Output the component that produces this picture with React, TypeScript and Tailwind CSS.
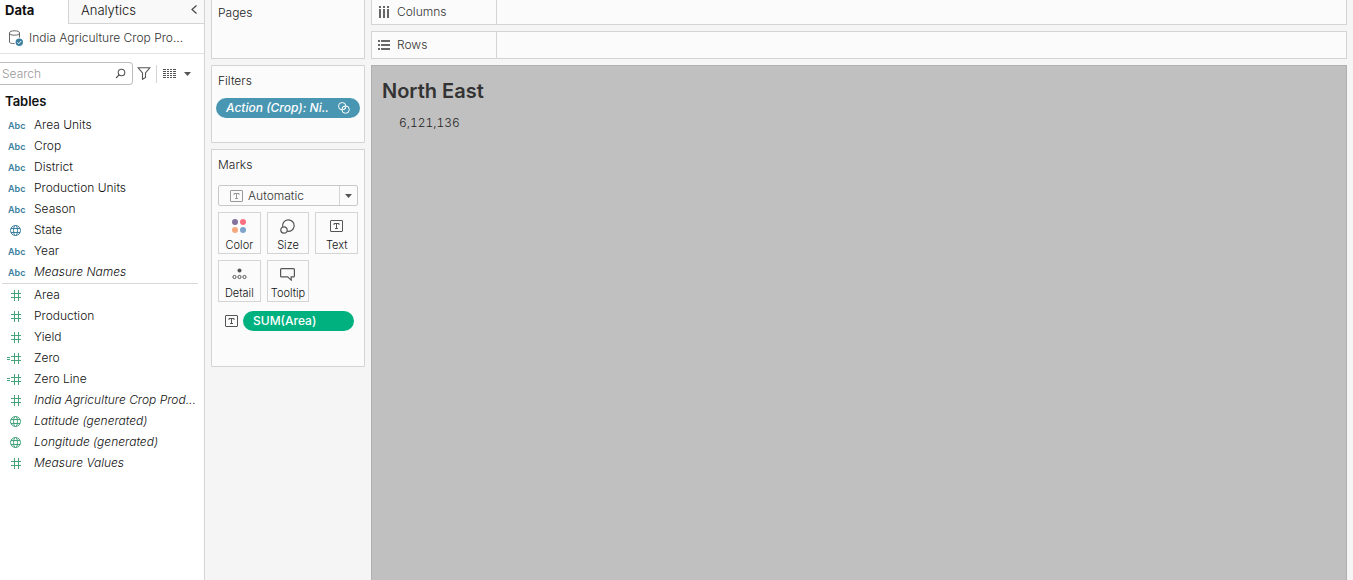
import type { ReactNode } from "react";

type FieldKind = "text" | "geo" | "number" | "calc";
type Field = { name: string; kind: FieldKind; generated?: boolean };

const dimensions: Field[] = [
  { name: "Area Units", kind: "text" },
  { name: "Crop", kind: "text" },
  { name: "District", kind: "text" },
  { name: "Production Units", kind: "text" },
  { name: "Season", kind: "text" },
  { name: "State", kind: "geo" },
  { name: "Year", kind: "text" },
  { name: "Measure Names", kind: "text", generated: true },
];

const measures: Field[] = [
  { name: "Area", kind: "number" },
  { name: "Production", kind: "number" },
  { name: "Yield", kind: "number" },
  { name: "Zero", kind: "calc" },
  { name: "Zero Line", kind: "calc" },
  { name: "India Agriculture Crop Prod...", kind: "number", generated: true },
  { name: "Latitude (generated)", kind: "geo", generated: true },
  { name: "Longitude (generated)", kind: "geo", generated: true },
  { name: "Measure Values", kind: "number", generated: true },
];

function GlobeIcon() {
  return (
    <svg width="11" height="11" viewBox="0 0 11 11" fill="none" stroke="currentColor" strokeWidth="1">
      <circle cx="5.5" cy="5.5" r="5" />
      <ellipse cx="5.5" cy="5.5" rx="2" ry="5" />
      <path d="M1 3.5h9M1 7.5h9" />
    </svg>
  );
}

function HashIcon({ calculated }: { calculated?: boolean }) {
  return (
    <svg width="15" height="11" viewBox="0 0 15 11" fill="none" stroke="currentColor" strokeWidth="1">
      {calculated && <path d="M0 4.5h3M0 6.5h3" />}
      <path d="M4 3.5h10M4 7.5h10M7.5 0v11M11.5 0v11" />
    </svg>
  );
}

function FieldIcon({ kind }: { kind: FieldKind }) {
  if (kind === "text") return <span className="pl-px text-[9px] font-semibold">Abc</span>;
  if (kind === "geo") return <span className="pl-[3px]"><GlobeIcon /></span>;
  return <HashIcon calculated={kind === "calc"} />;
}

function FieldList({ fields, tone }: { fields: Field[]; tone: string }) {
  return (
    <ul>
      {fields.map((f) => (
        <li key={f.name} className="flex h-[21px] items-center">
          <span className={`flex w-[27px] shrink-0 items-center pt-0.5 ${tone}`}>
            <FieldIcon kind={f.kind} />
          </span>
          <span className={`whitespace-nowrap ${f.generated ? "italic" : ""}`}>{f.name}</span>
        </li>
      ))}
    </ul>
  );
}

function TextMarkIcon() {
  return (
    <svg width="13" height="12" viewBox="0 0 13 12" fill="none" stroke="currentColor">
      <rect x="0.5" y="0.5" width="12" height="11" rx="0.5" />
      <path d="M4 5V3.500h5V5M6.500 3.500V9M5 8.500h3" />
    </svg>
  );
}

function ColorIcon() {
  return (
    <svg width="14" height="14" viewBox="0 0 14 14">
      <circle cx="3" cy="3" r="3" fill="#83709b" />
      <circle cx="11" cy="3" r="3" fill="#fb6f80" />
      <circle cx="3" cy="11" r="3" fill="#f6a77c" />
      <circle cx="11" cy="11" r="3" fill="#7ea3cd" />
    </svg>
  );
}

function SizeIcon() {
  return (
    <svg width="15" height="15" viewBox="0 0 15 15" fill="none" stroke="currentColor" strokeWidth="1.2">
      <path d="M2.700 7.800A5.800 5.800 0 1 1 7.200 12.300" />
      <circle cx="4" cy="11" r="3.200" />
    </svg>
  );
}

function DetailIcon() {
  return (
    <svg width="15" height="12" viewBox="0 0 15 12" fill="none" stroke="currentColor">
      <circle cx="7.5" cy="2.5" r="2" fill="currentColor" stroke="none" />
      <circle cx="2.5" cy="9" r="1.600" />
      <circle cx="7.5" cy="9" r="1.600" />
      <circle cx="12.5" cy="9" r="1.600" />
    </svg>
  );
}

function TooltipIcon() {
  return (
    <svg width="15" height="13" viewBox="0 0 15 13" fill="none" stroke="currentColor" strokeWidth="1.2">
      <path d="M1.500 0.600h12q0.900 0 0.900 0.900v6.500q0 0.900-0.900 0.900h-2.300v3.200L7.600 8.900H1.500q-0.900 0-0.900-0.900V1.500q0-0.900 0.900-0.900z" />
    </svg>
  );
}

function Caret() {
  return (
    <svg width="7" height="4" viewBox="0 0 7 4">
      <path d="M0 0h7L3.500 4z" fill="#555" />
    </svg>
  );
}

function MarkButton({ label, children }: { label: string; children: ReactNode }) {
  return (
    <button type="button" className="flex h-[42px] flex-col items-center border border-[#d4d4d4] text-[11px] leading-4 text-[#111]">
      <span className="flex h-[26px] items-center justify-center text-[#555]">{children}</span>
      <span className="-mt-0.5">{label}</span>
    </button>
  );
}

function Shelf({ label, icon, className }: { label: string; icon: ReactNode; className: string }) {
  return (
    <section className={`flex border border-[#d4d4d4] bg-[#fbfbfb] text-[#333] ${className}`}>
      <h2 className="flex w-[125px] border-r border-[#d4d4d4] pt-[5px] pl-1.5">
        <span className="flex h-4 items-center gap-1.5">
          {icon}
          {label}
        </span>
      </h2>
    </section>
  );
}

export default function App() {
  return (
    <div className="flex min-h-screen bg-[#f5f5f5] font-['Inter',sans-serif] text-[12px] leading-4 font-light text-[#111]">
      <aside className="w-[205px] shrink-0 border-r border-[#d4d4d4] bg-white">
        <div className="flex h-6">
          <button type="button" className="w-[68px] pb-1 pl-[5px] text-left text-[13px] font-bold text-[#111]">
            Data
          </button>
          <div className="flex flex-1 items-center justify-between border-b border-l border-[#d4d4d4] bg-[#f9f9f9] pr-[7px] pl-3">
            <button type="button" className="pb-1 text-[13px]">Analytics</button>
            <button type="button" aria-label="Collapse pane" className="pb-1 text-[#444]">
              <svg width="6" height="9" viewBox="0 0 6 9" fill="none" stroke="currentColor" strokeWidth="1.2">
                <path d="M5.500 0.500l-4.500 4 4.500 4" />
              </svg>
            </button>
          </div>
        </div>

        <div className="flex h-[30px] items-center gap-1.5 border-b border-[#e2e2e2] pb-px pl-2 text-[#333]">
          <svg width="15" height="16" viewBox="0 0 15 16" fill="none">
            <path d="M6.500 13.500H4.500C2.900 13.500 1.500 12.900 1.500 12V3M11.500 3v4.500" stroke="#666" />
            <ellipse cx="6.500" cy="3" rx="5" ry="2.200" stroke="#666" />
            <circle cx="11.300" cy="12.300" r="3.700" fill="#3c7f9f" />
            <path d="M9.500 12.400l1.300 1.300 2.400-2.700" stroke="#fff" />
          </svg>
          <span className="truncate">India Agriculture Crop Pro...</span>
        </div>

        <div className="mt-2 flex h-[23px] items-center">
          <label className="flex h-full w-[133px] items-center rounded-r-sm border border-l-0 border-[#bdbdbd] pr-1.5 pl-0.5">
            <input
              type="text"
              aria-label="Search fields"
              placeholder="Search"
              className="min-w-0 flex-1 bg-transparent outline-none placeholder:text-[#999]"
            />
            <svg width="11" height="11" viewBox="0 0 11 11" fill="none" stroke="#555" strokeWidth="1.1">
              <circle cx="6.500" cy="4.500" r="3.300" />
              <path d="M4 7L1 10" />
            </svg>
          </label>
          <button type="button" aria-label="Filter fields" className="ml-1">
            <svg width="14" height="13" viewBox="0 0 14 13" fill="none" stroke="#555" strokeWidth="1.1">
              <path d="M1 0.700h12L8.500 6v4.500l-3 1.800V6z" />
            </svg>
          </button>
          <span className="ml-[5px] h-[18px] w-px bg-[#d4d4d4]" />
          <button type="button" aria-label="View options" className="ml-1.5 flex items-center gap-2">
            <svg width="13" height="9" viewBox="0 0 13 9" stroke="#555" strokeDasharray="3 1 2 1 2 1 3">
              <path d="M0 0.500h13M0 2.500h13M0 4.500h13M0 6.500h13M0 8.500h13" />
            </svg>
            <Caret />
          </button>
        </div>

        <h2 className="mt-2 pl-[5px] text-[13px] font-semibold text-[#111]">Tables</h2>
        <div className="pt-[5px] pr-1.5 pl-0.5">
          <div className="pl-[5px]">
            <FieldList fields={dimensions} tone="text-[#3c7f9f]" />
          </div>
          <hr className="mt-px border-[#d9d9d9]" />
          <div className="pl-[5px]">
            <FieldList fields={measures} tone="text-[#45a37c]" />
          </div>
        </div>
      </aside>

      <div className="flex w-[166px] shrink-0 flex-col gap-1.5 px-1.5 text-[#222]">
        <section className="h-[59px] border border-t-0 border-[#d4d4d4] bg-[#fbfbfb] px-1.5 pt-[5px]">
          <h2>Pages</h2>
        </section>
        <section className="h-[78px] border border-[#d4d4d4] bg-[#fbfbfb] px-1 pt-[7px]">
          <h2 className="pl-0.5">Filters</h2>
          <button
            type="button"
            className="mt-[9px] flex h-5 w-full items-center justify-between rounded-full bg-[#4996b2] px-2.5 font-medium text-white italic"
          >
            Action (Crop): Ni..
            <svg width="12" height="12" viewBox="0 0 12 12" fill="none" stroke="currentColor">
              <circle cx="4.200" cy="4.200" r="3.700" />
              <circle cx="7.600" cy="7.600" r="3.700" />
              <path d="M5.900 4L7.800 5.900 5.900 7.800 4 5.900z" strokeWidth="0.7" />
            </svg>
          </button>
        </section>
        <section className="h-[218px] border border-[#d4d4d4] bg-[#fbfbfb] px-1.5 pt-[7px]">
          <h2>Marks</h2>
          <div className="relative mt-3 h-[21px] rounded-xs border border-[#c8c8c8]">
            <select aria-label="Mark type" className="h-full w-full appearance-none pl-[29px] text-[#333] outline-none">
              <option>Automatic</option>
            </select>
            <span className="pointer-events-none absolute inset-y-0 left-[11px] flex items-center text-[#999]">
              <TextMarkIcon />
            </span>
            <span className="pointer-events-none absolute inset-y-0 right-0 flex w-[18px] items-center justify-center border-l border-[#d4d4d4]">
              <Caret />
            </span>
          </div>
          <div className="mt-1.5 grid grid-cols-3 gap-1.5">
            <MarkButton label="Color"><ColorIcon /></MarkButton>
            <MarkButton label="Size"><SizeIcon /></MarkButton>
            <MarkButton label="Text"><TextMarkIcon /></MarkButton>
            <MarkButton label="Detail"><DetailIcon /></MarkButton>
            <MarkButton label="Tooltip"><TooltipIcon /></MarkButton>
          </div>
          <div className="mt-[9px] flex items-center gap-[5px] pr-1 pl-[7px] text-[#555]">
            <TextMarkIcon />
            <button type="button" className="h-5 flex-1 rounded-full bg-[#00b180] pl-2.5 text-left font-medium text-white">
              SUM(Area)
            </button>
          </div>
        </section>
      </div>

      <main className="flex min-w-0 flex-1 flex-col gap-1.5 pr-1.5">
        <Shelf
          label="Columns"
          className="-mt-0.5 h-[27px]"
          icon={
            <svg width="13" height="12" viewBox="0 0 13 12" fill="#666">
              <path d="M1 0h2v2H1zM5 0h2v2H5zM9 0h2v2H9zM1 3h2v9H1zM5 3h2v9H5zM9 3h2v9H9z" />
            </svg>
          }
        />
        <Shelf
          label="Rows"
          className="h-7"
          icon={
            <svg width="13" height="10" viewBox="0 0 13 10" fill="#666">
              <path d="M0 0h2v2H0zM0 4h2v2H0zM0 8h2v2H0zM3 0h9v2H3zM3 4h9v2H3zM3 8h9v2H3z" />
            </svg>
          }
        />
        <section className="flex-1 border border-b-0 border-[#b0b0b0] bg-[#c0c0c0] px-2.5 pt-[11px] text-[#222]">
          <h1 className="text-[20px] leading-7 font-semibold text-[#333]">North East</h1>
          <p className="mt-2.5 pl-[17px] tabular-nums">6,121,136</p>
        </section>
      </main>
    </div>
  );
}
